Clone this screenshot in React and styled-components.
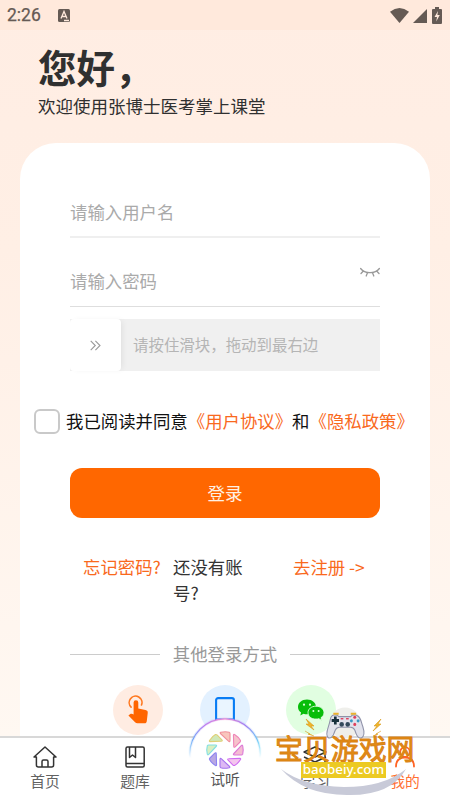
import React from 'react';
import styled, { createGlobalStyle } from 'styled-components';

const Global = createGlobalStyle`
  * { box-sizing: border-box; }
  body { margin: 0; font-family: "Noto Sans CJK SC", "Noto Sans", sans-serif; }
  button, input { font: inherit; }
`;

const Phone = styled.div`
  position: relative;
  width: 450px;
  height: 800px;
  display: flex;
  flex-direction: column;
  overflow: hidden;
  background: linear-gradient(#ffede3 0, #ffefe5 250px, #fff8f2 737px);
`;
const StatusBar = styled.div`
  flex: none;
  height: 30px;
  padding: 0 8px 0 7px;
  display: flex;
  align-items: center;
  background: #ffe9dc;
  color: #655a54;
  font: 400 17.5px/30px Roboto, sans-serif;
  svg { display: block; }
`;
const Clock = styled.span` flex: 1; display: flex; align-items: center; gap: 17px; -webkit-text-stroke: 0.25px #655a54; `;
const Signals = styled.span` display: flex; align-items: center; gap: 4px; `;
const Main = styled.main`
  flex: 1;
  min-height: 0;
  overflow: hidden;
`;
const Greeting = styled.header`
  height: 113px;
  padding: 13px 0 0 38px;
  color: #303030;
`;
const Title = styled.h1`
  margin: 0;
  font-size: 38.5px;
  line-height: 46px;
  font-weight: 600;
`;
const Subtitle = styled.p`
  margin: 3px 0 0;
  font-size: 17.5px;
  line-height: 28px;
`;
const Card = styled.section`
  margin: 0 20px;
  height: 700px;
  padding: 45px 50px 0;
  border-radius: 36px;
  background: #fff;
`;
const Field = styled.label`
  display: flex;
  height: ${(p) => p.$height}px;
  padding-top: ${(p) => p.$top}px;
  border-bottom: ${(p) => (p.$soft ? '2px solid #efefef' : '1px solid #dedede')};
  svg { flex: none; margin-top: -1px; }
`;
const Input = styled.input`
  flex: 1;
  min-width: 0;
  height: 26px;
  padding: 0;
  border: 0;
  outline: 0;
  background: none;
  font-size: 17.4px;
  line-height: 26px;
  &::placeholder { color: #aaa; opacity: 1; }
`;
const Slider = styled.div`
  display: flex;
  height: 52px;
  margin-top: 12px;
  background: #f0f0f0;
  color: #b5b5b5;
  font-size: 15.45px;
  line-height: 51px;
`;
const Thumb = styled.div`
  width: 51px;
  margin-right: 12px;
  display: grid;
  place-items: center;
  border-radius: 4px;
  background: #fff;
  box-shadow: 3px 0 6px -2px rgba(0, 0, 0, 0.08);
`;
const Agreement = styled.label`
  display: flex;
  align-items: center;
  height: 26px;
  margin: 37px -36px 0;
  color: #111;
  font-size: 17.4px;
  line-height: 26px;
  white-space: nowrap;
`;
const Checkbox = styled.input`
  appearance: none;
  flex: none;
  width: 26px;
  height: 25px;
  margin: 0 6px 0 0;
  border: 2.5px solid #c9c9c9;
  border-radius: 6px;
`;
const Link = styled.a` color: #f9691d; `;
const Submit = styled.button`
  display: block;
  width: 310px;
  height: 50px;
  margin-top: 34px;
  padding: 0;
  border: 0;
  border-radius: 12px;
  background: #ff6700;
  color: #fff1e4;
  font-size: 17.5px;
  line-height: 50px;
`;
const Links = styled.div`
  display: flex;
  margin-top: 36px;
  padding-left: 13px;
  height: 51px;
  color: #333;
  font-size: 17.4px;
  line-height: 25.5px;
  white-space: nowrap;
`;
const Question = styled.span` width: 80px; margin: 0 40px 0 12px; white-space: normal; `;
const Forgot = styled(Link)` width: 78px; `;
const Divider = styled.div`
  display: flex;
  align-items: center;
  gap: 13px;
  height: 26px;
  margin-top: 36px;
  color: #999;
  font-size: 17.4px;
  line-height: 26px;
  &::before, &::after { content: ''; flex: 1; height: 1px; background: #ccc; }
`;
const Providers = styled.div`
  display: flex;
  gap: 36.5px;
  margin: 18px 0 0 43px;
`;
const Provider = styled.button`
  width: 50px;
  height: 50px;
  padding: 0;
  border: 0;
  border-radius: 50%;
  display: grid;
  place-items: center;
  background: ${(p) => p.$tint};
`;
const TabBar = styled.nav`
  position: relative;
  flex: none;
  height: 64px;
  display: grid;
  grid-template-columns: repeat(5, 1fr);
  border-top: 2px solid #d8d8d8;
  background: #fff;
`;
const Tab = styled.a`
  display: flex;
  flex-direction: column;
  align-items: center;
  padding-top: 7px;
  color: ${(p) => (p.$active ? '#ff7033' : '#626262')};
  font-size: 14.8px;
  line-height: 22px;
  svg { display: block; margin-bottom: 1px; }
`;
const CenterTab = styled.a`
  position: absolute;
  left: 185px;
  top: -22px;
  width: 80px;
  color: #565656;
  font-size: 14.8px;
  line-height: 20px;
  text-align: center;
  svg { display: block; height: 60px; margin-bottom: -7px; }
`;
const Watermark = styled.div`
  position: absolute;
  left: 272px;
  top: 704px;
  width: 150px;
  height: 96px;
  pointer-events: none;
`;
const MarkArt = styled.svg` position: absolute; inset: 0; `;
const MarkName = styled.div`
  position: absolute;
  left: 3px;
  top: 26px;
  color: #e38b16;
  font-size: 27.9px;
  line-height: 36px;
  font-weight: 400;
  white-space: nowrap;
  -webkit-text-stroke: 0.9px #d98212;
`;
const MarkUrl = styled.div`
  position: absolute;
  left: 29px;
  top: 58px;
  width: 85px;
  height: 16px;
  background: #ecca22;
  color: #fff;
  font: 500 13.4px/14px "Noto Sans", sans-serif;
  text-align: center;
`;

const WifiIcon = () => (
  <svg width="19" height="15" viewBox="0 0 19 15" fill="#655a54"><path d="M0 3.7Q9.5-3.5 19 3.7L9.500 15Z" /></svg>
);
const SignalIcon = () => (
  <svg width="15" height="15" viewBox="0 0 15 15" fill="#655a54"><path d="M0 15 14 1V15Z" /></svg>
);
const BatteryIcon = () => (
  <svg width="10" height="17" viewBox="0 0 10 17">
    <path d="M3 0h4v2h2q1 0 1 1v13q0 1-1 1H1q-1 0-1-1V3q0-1 1-1h2Z" fill="#655a54" />
    <path d="M6 4 2.500 10H5l-.8 4.500L7.800 8H5.400Z" fill="#ffe9dc" />
  </svg>
);
const KeyboardBadge = () => (
  <svg width="12" height="13" viewBox="0 0 12 13">
    <rect width="12" height="13" rx="1.5" fill="#655a54" />
    <path d="m3 9.500 3-7 3 7M4 7.500h4M6 11.500h5" fill="none" stroke="#ffe9dc" strokeWidth="1.3" />
  </svg>
);
const ClosedEye = () => (
  <svg width="20" height="12" viewBox="0 0 20 12" fill="none" stroke="#999" strokeWidth="1.3" strokeLinecap="round">
    <path d="M.6 1.500C5 7.100 15 7.100 19.400 1.500M3.400 4 1 6.500M7.600 5.500 6.200 9M12.400 5.500 13.800 9M16.600 4 19 6.500" />
  </svg>
);
const Chevrons = () => (
  <svg width="11" height="11" viewBox="0 0 11 11" fill="none" stroke="#999" strokeWidth="1.1"><path d="m.7.8 4.600 4.700L.7 10.200M5.400.8 10 5.500 5.400 10.200" /></svg>
);
const TapIcon = () => (
  <svg width="22" height="30" viewBox="1 0 22 30">
    <path d="M5.100 12.100A6.400 6.400 0 1 1 15.500 10" fill="none" stroke="#ff781f" strokeWidth="1.6" strokeLinecap="round" />
    <path d="M7.600 18V7.600a2.300 2.300 0 0 1 4.700 0v6l7.200 1.500c1.800.4 2.500 1.400 2.200 3.200L20.800 26c-.2 1.600-.9 2.300-2.200 2.300h-7.200c-1 0-1.700-.4-2.300-1.100L2.400 20.500 4 19.200c1-.6 2.200-.6 3.600.3Z" fill="#ff6500" />
  </svg>
);
const PhoneIcon = () => (
  <svg width="20" height="27" viewBox="0 0 20 27">
    <rect x="1.1" y="1.1" width="17.8" height="25" rx="2" fill="#eaf5ff" stroke="#087cf4" strokeWidth="2.1" />
    <path d="M1 22.500h18" stroke="#087cf4" strokeWidth="2" />
  </svg>
);
const WechatIcon = () => (
  <svg width="28" height="24" viewBox="0 0 28 24">
    <path d="M10 1.400c-5.300 0-9 3.300-9 7.500 0 2.400 1.200 4.300 3.100 5.600l-.8 3 3.200-1.800q1.700.5 3.500.5c5.200 0 9-3.200 9-7.300s-3.800-7.500-9-7.500Z" fill="#08bd0a" />
    <path d="M19 8.200c-4.700 0-8 2.800-8 6.500s3.300 6.400 8 6.400q1.500 0 2.800-.4l3 1.700-.8-2.700c1.900-1.200 3-2.900 3-5 0-3.700-3.500-6.500-8-6.500Z" fill="#08bd0a" stroke="#e1fee1" strokeWidth=".9" />
    <g fill="#d9ffd9"><circle cx="7" cy="6.7" r="1.1" /><circle cx="13" cy="6.7" r="1.1" /><circle cx="16.4" cy="13" r="1" /><circle cx="21.6" cy="13" r="1" /></g>
  </svg>
);
const HomeIcon = () => (
  <svg width="24" height="24" viewBox="0 0 24 24" fill="none" stroke="#333" strokeWidth="1.5" strokeLinejoin="round" strokeLinecap="round">
    <path d="M1 12 12 2l11 10-2.400.1V20q0 2-2 2H5.400q-2 0-2-2v-7.900ZM9 22v-5.500q0-1.500 1.500-1.500h3q1.500 0 1.500 1.500V22" />
  </svg>
);
const BookIcon = () => (
  <svg width="24" height="24" viewBox="0 0 24 24" fill="none" stroke="#333" strokeWidth="1.5" strokeLinejoin="round">
    <path d="M4.500 2h15.200q1.500 0 1.500 1.500v17q0 1.500-1.500 1.500H4.500Q3 22 3 20.500V3.500Q3 2 4.500 2ZM3 18.400h18.200M6.500 2v10.500l3-2.500 3 2.500V2" />
  </svg>
);
const StudyIcon = () => (
  <svg width="24" height="24" viewBox="0 0 24 24" fill="none" stroke="#333" strokeWidth="1.4" strokeLinejoin="round">
    <path d="m1 7 11-5 11 5-11 5ZM1 12l11 5 11-5M22 6v16" />
  </svg>
);
const ProfileIcon = () => (
  <svg width="24" height="24" viewBox="0 0 24 24" fill="none" stroke="#ff6425" strokeWidth="1.8" strokeLinecap="round">
    <circle cx="12" cy="7" r="4.8" /><path d="M3 21.500q0-9 9-9t9 9" />
  </svg>
);

const BLADES = [
  ['#f8c6bd', '#f0909a'], ['#f6c3cb', '#ee84b8'], ['#f4bcd2', '#dc78d8'], ['#f4c6ee', '#cf6cf2'],
  ['#ddb8f4', '#a473ee'], ['#b9a8e4', '#8c84f0'], ['#d9efc2', '#82dfe2'], ['#cfe8b8', '#e0cf76'],
];
const Bubble = () => (
  <svg width="80" height="60" viewBox="0 0 80 60">
    <defs>
      <linearGradient id="ring" x1="0" x2="1">
        <stop offset="0" stopColor="#59aef8" /><stop offset=".2" stopColor="#b87df2" /><stop offset=".5" stopColor="#ec89d2" />
        <stop offset=".8" stopColor="#9b7df3" /><stop offset="1" stopColor="#62d6f7" />
      </linearGradient>
      <linearGradient id="fade" x1="0" y1="0" x2="0" y2="1">
        <stop offset=".55" stopColor="#fff" /><stop offset="1" stopColor="#000" />
      </linearGradient>
      <mask id="ringMask"><rect width="80" height="42" fill="url(#fade)" /></mask>
    </defs>
    <circle cx="40" cy="38" r="35.5" fill="#fff" />
    <g mask="url(#ringMask)" fill="none" stroke="url(#ring)">
      <circle cx="40" cy="38" r="35.2" strokeWidth="3" opacity=".2" />
      <circle cx="40" cy="38" r="35.2" strokeWidth="1.2" />
    </g>
    {BLADES.map(([fill, stroke], i) => (
      <path key={i} transform={`translate(40 34) rotate(${i * 45})`}
        d="M-4.200-17.700Q.5-18.800 4.200-17.700 5-17.300 5-16.300V-9.400Q4.800-7.600 3.500-8.900L-4.600-16.500Q-5.300-17.400-4.200-17.700Z"
        fill={fill} stroke={stroke} strokeWidth="1.1" strokeLinejoin="round" />
    ))}
  </svg>
);
const WatermarkArt = () => (
  <MarkArt width="150" height="96" viewBox="0 0 150 96">
    <circle cx="73" cy="19" r="15.5" fill="#efefeb" />
    <g transform="translate(23.8 5.500) scale(.67 .71)">
      <path d="M54 9q1-2 8-1l2 2h18l2-2q7-1 8 1c5 2 5 7 8 15 3 9 2 14-2 16-4 1-6-1-8-6l-2-5q-2-4-6-4H65q-4 0-6 4l-3 7q-3 5-7 4c-4-2-3-9 0-17 3-8 2-12 5-14Z" fill="#e1e2ec" stroke="#8f92a9" strokeWidth="1.6" />
      <path d="M56 6h8M82 6h8" stroke="#eab22d" strokeWidth="2.500" />
      <path d="M59 10v11M53.500 15.500h11" stroke="#17303d" strokeWidth="4" />
      <g fill="#344a5c"><circle cx="68.5" cy="21" r="3.4" /><circle cx="77.500" cy="21" r="3.4" /></g>
      <g fill="#df405d"><circle cx="88" cy="11" r="2.2" /><circle cx="88" cy="21" r="2.2" /><rect x="67" y="12" width="4" height="2" /><rect x="75" y="12" width="4" height="2" /></g>
      <g fill="#3a99c5"><circle cx="83" cy="16" r="2.2" /><circle cx="93" cy="16" r="2.200" /></g>
    </g>
    <path d="m34 15 8 7h-3l3 4-8-6 3 0ZM109 15l-7 7h3l-4 5 8-7h-3ZM33 27l5 3h-2l6 2M109 27l-5 3h2l-5 2" fill="#efb52c" stroke="#d99a1c" strokeWidth=".6" />
    <path d="M9 65Q31 82 72 83 112 83 134 65 119 92 75 91 32 91 9 65Z" fill="#c8cad8" />
  </MarkArt>
);

export default function App() {
  return (
    <Phone>
      <Global />
      <StatusBar>
        <Clock>2:26 <KeyboardBadge /></Clock>
        <Signals><WifiIcon /><SignalIcon /><BatteryIcon /></Signals>
      </StatusBar>
      <Main>
        <Greeting>
          <Title>您好，</Title>
          <Subtitle>欢迎使用张博士医考掌上课堂</Subtitle>
        </Greeting>
        <Card>
          <Field $height={50} $top={11} $soft><Input placeholder="请输入用户名" /></Field>
          <Field $height={69} $top={30}><Input type="password" placeholder="请输入密码" /><ClosedEye /></Field>
          <Slider><Thumb><Chevrons /></Thumb>请按住滑块，拖动到最右边</Slider>
          <Agreement>
            <Checkbox type="checkbox" />我已阅读并同意<Link>《用户协议》</Link>和<Link>《隐私政策》</Link>
          </Agreement>
          <Submit>登录</Submit>
          <Links>
            <Forgot>忘记密码?</Forgot>
            <Question>还没有账号?</Question>
            <Link>去注册 -&gt;</Link>
          </Links>
          <Divider>其他登录方式</Divider>
          <Providers>
            <Provider $tint="#ffece2"><TapIcon /></Provider>
            <Provider $tint="#e3f1ff"><PhoneIcon /></Provider>
            <Provider $tint="#e1fee1"><WechatIcon /></Provider>
          </Providers>
        </Card>
      </Main>
      <TabBar>
        <Tab><HomeIcon />首页</Tab>
        <Tab><BookIcon />题库</Tab>
        <span />
        <Tab><StudyIcon />学习</Tab>
        <Tab $active><ProfileIcon />我的</Tab>
        <CenterTab><Bubble />试听</CenterTab>
      </TabBar>
      <Watermark>
        <WatermarkArt />
        <MarkName>宝贝游戏网</MarkName>
        <MarkUrl>baobeiy.com</MarkUrl>
      </Watermark>
    </Phone>
  );
}
